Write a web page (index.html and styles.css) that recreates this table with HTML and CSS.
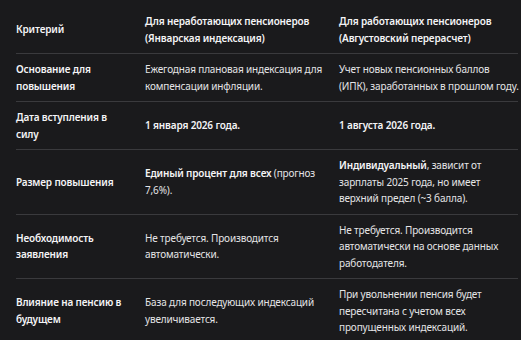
FILE: index.html
```html
<!DOCTYPE html>
<html lang="ru">
<head>
<meta charset="utf-8">
<link rel="stylesheet" href="styles.css">
</head>
<body>
<div class="table">
  <div class="row head">
    <div class="cell c1"><span>Критерий</span></div>
    <div class="cell"><span>Для неработающих пенсионеров (Январская индексация)</span></div>
    <div class="cell"><span>Для работающих пенсионеров (Августовский перерасчет)</span></div>
  </div>
  <div class="row">
    <div class="cell c1"><span>Основание для повышения</span></div>
    <div class="cell"><span>Ежегодная плановая индексация для компенсации инфляции.</span></div>
    <div class="cell"><span>Учет новых пенсионных баллов <span class="nw">(ИПК), заработанных в прошлом году.</span></span></div>
  </div>
  <div class="row">
    <div class="cell c1"><span>Дата вступления в силу</span></div>
    <div class="cell"><span><b>1 января 2026 года.</b></span></div>
    <div class="cell"><span><b>1 августа 2026 года.</b></span></div>
  </div>
  <div class="row">
    <div class="cell c1"><span>Размер повышения</span></div>
    <div class="cell"><span><b>Единый процент для всех</b> (прогноз 7,6%).</span></div>
    <div class="cell"><span><b>Индивидуальный</b>, зависит от зарплаты 2025 года, но имеет верхний предел (~3 балла).</span></div>
  </div>
  <div class="row">
    <div class="cell c1"><span>Необходимость заявления</span></div>
    <div class="cell"><span>Не требуется. Производится автоматически.</span></div>
    <div class="cell"><span>Не требуется. Производится автоматически на основе данных работодателя.</span></div>
  </div>
  <div class="row last">
    <div class="cell c1"><span>Влияние на пенсию в будущем</span></div>
    <div class="cell"><span>База для последующих индексаций увеличивается.</span></div>
    <div class="cell"><span>При увольнении пенсия будет пересчитана с учетом всех пропущенных индексаций.</span></div>
  </div>
</div>
</body>
</html>
```
FILE: styles.css
```css
html, body {
  margin: 0;
  background: #1a1a1c;
}
body {
  padding: 6px 0 0 16px;
  font-family: "Noto Sans", "Open Sans", sans-serif;
  font-size: 10px;
  letter-spacing: -0.15px;
  line-height: 16.5px;
  color: #e4e4e6;
}
.table {
  width: 502px;
}
.row {
  display: grid;
  grid-template-columns: 129px 194px 179px;
  border-bottom: 1px solid #3a3a3d;
}
.row.last {
  border-bottom: none;
}
.cell {
  padding: 7px 16px 7px 0;
  display: flex;
  align-items: center;
}
.cell:last-child {
  padding-right: 0;
}
.nw {
  white-space: nowrap;
}
.cell b, .c1, .head .cell {
  font-weight: 600;
  color: #f4f4f6;
}
```
